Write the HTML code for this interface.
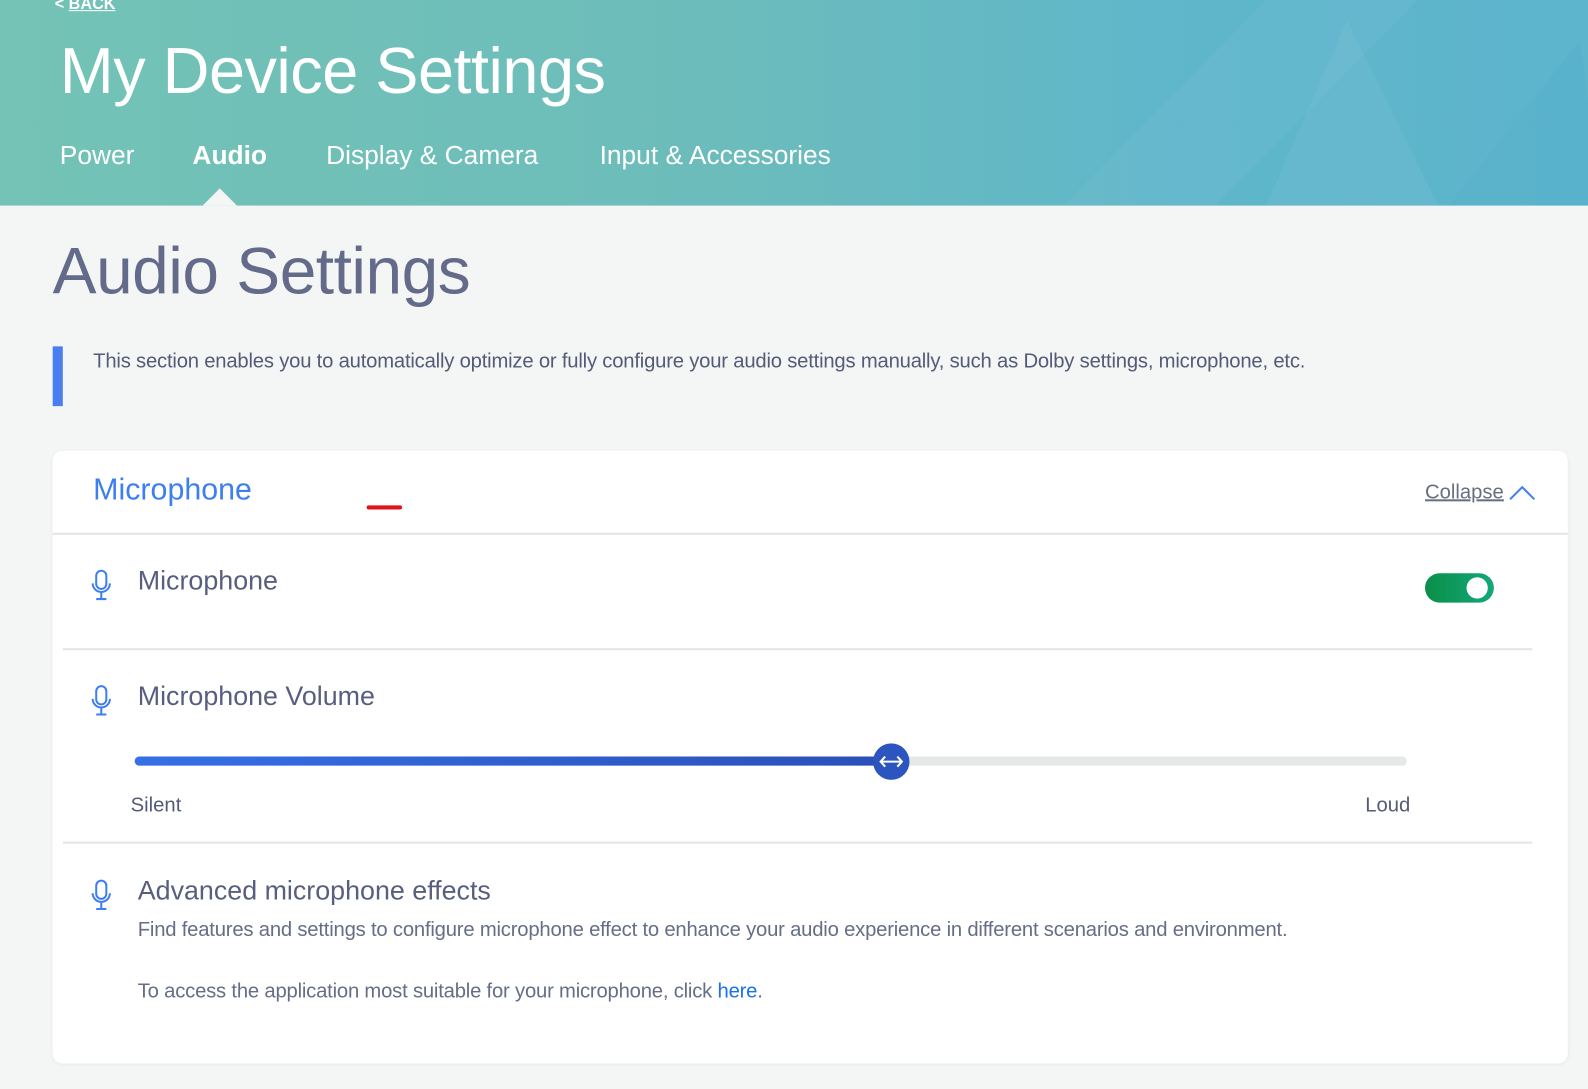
<!DOCTYPE html>
<html><head><meta charset="utf-8"><style>
*{margin:0;padding:0;box-sizing:border-box}
html,body{width:1588px;height:1089px;overflow:hidden}
body{background:#f4f6f5;font-family:"Liberation Sans",sans-serif;position:relative}
#w{position:absolute;left:0;top:0;width:1568px;height:1076px;transform:scale(1.0128);transform-origin:0 0}
.hdr{position:absolute;left:0;top:0;width:1568px;height:203px;background:linear-gradient(90deg,#74c3b6 0%,#6cbcbb 45%,#5fb6cb 75%,#5cb4cd 100%);overflow:hidden}
.abs{position:absolute;white-space:nowrap}
.back{left:54px;top:-4px;color:#fff;font-size:16px;font-weight:bold}
.t1{left:59px;top:33px;color:#fff;font-size:64px;letter-spacing:-0.5px}
.tab{top:138px;color:#fff;font-size:26px}
.tri{position:absolute;left:200px;top:186px;width:0;height:0;border-left:17px solid transparent;border-right:17px solid transparent;border-bottom:17px solid #f4f6f5}
.h2{left:52px;top:230px;color:#646a8a;font-size:65px;letter-spacing:-0.5px}
.bar{position:absolute;left:52px;top:342px;width:10px;height:59px;background:#4a7ef0}
.desc{left:92px;top:346px;color:#535b76;font-size:20px;letter-spacing:-0.2px}
.card{position:absolute;left:52px;top:445px;width:1496px;height:605px;background:#fff;border-radius:10px;box-shadow:0 1px 4px rgba(0,0,0,.06)}
.line{position:absolute;height:2px;background:#e3e4e6}
.blue{color:#3d7ef1}
.row{color:#585f7e;font-size:26.5px}
.sub{color:#666d86;font-size:20px;letter-spacing:-0.2px}
</style></head><body><div id="w">
<div class="hdr">
<svg width="1568" height="203" style="position:absolute;left:0;top:0"><polygon points="1050,203 1250,0 1400,0 1200,203" fill="#ffffff" opacity="0.04"/><polygon points="1250,203 1330,20 1420,203" fill="#ffffff" opacity="0.05"/><polygon points="1430,203 1560,40 1568,100 1568,203" fill="#3fa0c0" opacity="0.08"/></svg>
<div class="abs back">&lt; <u>BACK</u></div>
<div class="abs t1">My Device Settings</div>
<div class="abs tab" style="left:59px">Power</div>
<div class="abs tab" style="left:190px;font-weight:bold">Audio</div>
<div class="abs tab" style="left:322px">Display &amp; Camera</div>
<div class="abs tab" style="left:592px">Input &amp; Accessories</div>
<div class="tri"></div>
</div>
<div class="abs h2">Audio Settings</div>
<div class="bar"></div>
<div class="abs desc">This section enables you to automatically optimize or fully configure your audio settings manually, such as Dolby settings, microphone, etc.</div>
<div class="card">
<div class="abs blue" style="left:40px;top:22px;font-size:30px">Microphone</div>
<div style="position:absolute;left:310px;top:54px;width:35px;height:4px;background:#e0141c;border-radius:2px"></div>
<div class="abs" style="left:1355px;top:30px;font-size:20px;color:#667080;text-decoration:underline">Collapse</div>
<svg style="position:absolute;left:1437px;top:32px" width="28" height="18"><polyline points="2,16 14,4 26,16" fill="none" stroke="#3d7ef1" stroke-width="2"/></svg>
<div class="line" style="left:0;top:81px;width:1496px"></div>

<svg style="position:absolute;left:38px;top:117px" width="20" height="32" viewBox="0 0 20 32"><rect x="5" y="1.5" width="10" height="18" rx="5" fill="none" stroke="#3d7ef1" stroke-width="2"/><path d="M1.5 14 a8.5 8.5 0 0 0 17 0 M10 22.5 V29 M5 29.5 H15" fill="none" stroke="#3d7ef1" stroke-width="2"/></svg>
<div class="abs row" style="left:84px;top:113px">Microphone</div>
<div style="position:absolute;left:1355px;top:121px;width:68px;height:29px;border-radius:15px;background:linear-gradient(90deg,#0a8f48,#12a87a)"><div style="position:absolute;right:6px;top:4px;width:21px;height:21px;border-radius:50%;background:#fff"></div></div>
<div class="line" style="left:10px;top:195px;width:1451px"></div>

<svg style="position:absolute;left:38px;top:231px" width="20" height="32" viewBox="0 0 20 32"><rect x="5" y="1.5" width="10" height="18" rx="5" fill="none" stroke="#3d7ef1" stroke-width="2"/><path d="M1.5 14 a8.5 8.5 0 0 0 17 0 M10 22.5 V29 M5 29.5 H15" fill="none" stroke="#3d7ef1" stroke-width="2"/></svg>
<div class="abs row" style="left:84px;top:227px">Microphone Volume</div>
<div style="position:absolute;left:81px;top:302px;width:1256px;height:9px;border-radius:5px;background:#e6e8e8"></div>
<div style="position:absolute;left:81px;top:302px;width:747px;height:9px;border-radius:5px;background:linear-gradient(90deg,#3570e6,#2b4fb8)"></div>
<svg style="position:absolute;left:810px;top:289px" width="36" height="36"><circle cx="18" cy="18" r="18" fill="#2c55bf"/><path d="M8 18 H28 M12 13 L7.5 18 L12 23 M24 13 L28.5 18 L24 23" fill="none" stroke="#fff" stroke-width="2"/></svg>
<div class="abs" style="left:77px;top:339px;font-size:20px;color:#535b76">Silent</div>
<div class="abs" style="left:1296px;top:339px;font-size:20px;color:#535b76">Loud</div>
<div class="line" style="left:10px;top:386px;width:1451px"></div>

<svg style="position:absolute;left:38px;top:423px" width="20" height="32" viewBox="0 0 20 32"><rect x="5" y="1.5" width="10" height="18" rx="5" fill="none" stroke="#3d7ef1" stroke-width="2"/><path d="M1.5 14 a8.5 8.5 0 0 0 17 0 M10 22.5 V29 M5 29.5 H15" fill="none" stroke="#3d7ef1" stroke-width="2"/></svg>
<div class="abs row" style="left:84px;top:419px">Advanced microphone effects</div>
<div class="abs sub" style="left:84px;top:462px">Find features and settings to configure microphone effect to enhance your audio experience in different scenarios and environment.</div>
<div class="abs sub" style="left:84px;top:523px">To access the application most suitable for your microphone, click <span style="color:#1a73e8">here</span>.</div>
</div>
</div></body></html>
